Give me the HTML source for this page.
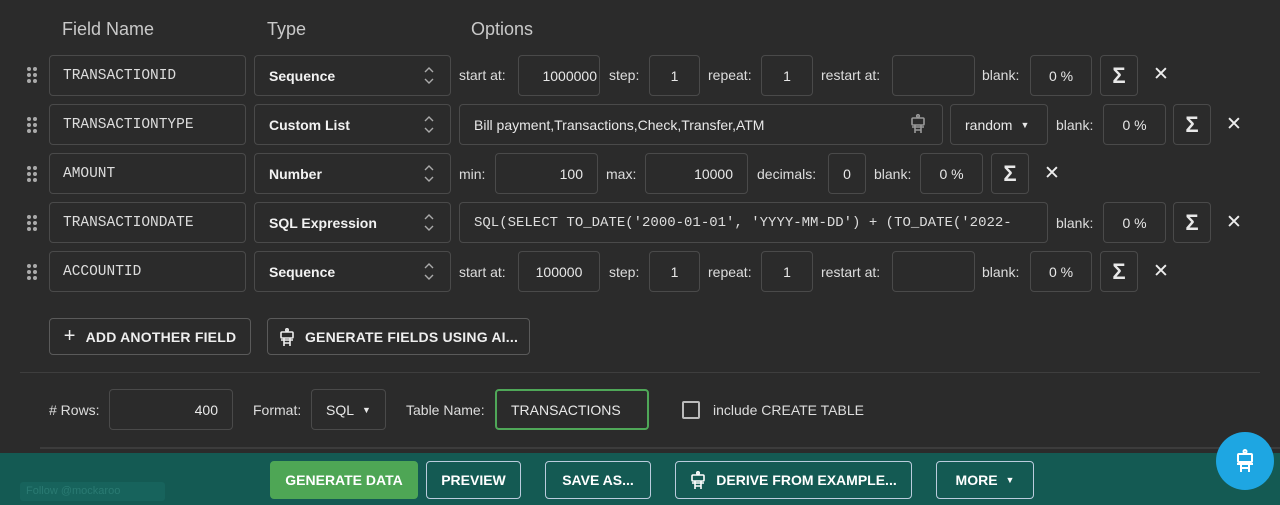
<!DOCTYPE html>
<html><head><meta charset="utf-8"><style>
*{box-sizing:border-box;margin:0;padding:0}
body{width:1280px;height:505px;background:#2b2b2b;font-family:"Liberation Sans",Arial,sans-serif;color:#e8e8e8;position:relative;overflow:hidden}
.a{position:absolute}
.h{font-size:18px;color:#c9c9c9;top:19px}
.b{position:absolute;border:1px solid #4a4a4a;border-radius:4px;height:41px;display:flex;align-items:center;font-size:14px}
.n{font-family:"Liberation Mono",monospace;font-size:14.5px;color:#ddd;padding-left:13px}
.t{font-weight:bold;padding-left:14px;color:#f2f2f2}
.r{justify-content:flex-end;padding-right:14px}
.c{justify-content:center}
.l{position:absolute;font-size:14px;color:#ddd}
.dr{position:absolute;width:10px;height:16px}
.dr i{position:absolute;width:4px;height:4px;border-radius:50%;background:#aaa}
.x{position:absolute;font-size:19px;color:#eee;line-height:1;font-weight:300}
.sg{font-size:22px;font-weight:bold}
.btn{position:absolute;border:1px solid #5a5a5a;border-radius:4px;height:37px;display:flex;align-items:center;justify-content:center;font-size:14px;font-weight:bold;color:#eee;letter-spacing:.2px}
.gb{position:absolute;border:1px solid #bcd;border-radius:4px;top:461px;height:38px;display:flex;align-items:center;justify-content:center;font-size:14px;font-weight:bold;color:#fff}
</style></head><body>
<div class="a h" style="left:62px">Field Name</div>
<div class="a h" style="left:267px">Type</div>
<div class="a h" style="left:471px">Options</div>

<div class="dr" style="left:27px;top:67px"><i style="left:0;top:0"></i><i style="left:6px;top:0"></i><i style="left:0;top:6px"></i><i style="left:6px;top:6px"></i><i style="left:0;top:12px"></i><i style="left:6px;top:12px"></i></div>
<div class="dr" style="left:27px;top:117px"><i style="left:0;top:0"></i><i style="left:6px;top:0"></i><i style="left:0;top:6px"></i><i style="left:6px;top:6px"></i><i style="left:0;top:12px"></i><i style="left:6px;top:12px"></i></div>
<div class="dr" style="left:27px;top:166px"><i style="left:0;top:0"></i><i style="left:6px;top:0"></i><i style="left:0;top:6px"></i><i style="left:6px;top:6px"></i><i style="left:0;top:12px"></i><i style="left:6px;top:12px"></i></div>
<div class="dr" style="left:27px;top:215px"><i style="left:0;top:0"></i><i style="left:6px;top:0"></i><i style="left:0;top:6px"></i><i style="left:6px;top:6px"></i><i style="left:0;top:12px"></i><i style="left:6px;top:12px"></i></div>
<div class="dr" style="left:27px;top:264px"><i style="left:0;top:0"></i><i style="left:6px;top:0"></i><i style="left:0;top:6px"></i><i style="left:6px;top:6px"></i><i style="left:0;top:12px"></i><i style="left:6px;top:12px"></i></div>

<div class="b n" style="left:49px;top:55px;width:197px">TRANSACTIONID</div>
<div class="b n" style="left:49px;top:104px;width:197px">TRANSACTIONTYPE</div>
<div class="b n" style="left:49px;top:153px;width:197px">AMOUNT</div>
<div class="b n" style="left:49px;top:202px;width:197px">TRANSACTIONDATE</div>
<div class="b n" style="left:49px;top:251px;width:197px">ACCOUNTID</div>
<div class="b t" style="left:254px;top:55px;width:197px">Sequence</div>
<div class="b t" style="left:254px;top:104px;width:197px">Custom List</div>
<div class="b t" style="left:254px;top:153px;width:197px">Number</div>
<div class="b t" style="left:254px;top:202px;width:197px">SQL Expression</div>
<div class="b t" style="left:254px;top:251px;width:197px">Sequence</div>
<svg class="a" style="left:424px;top:67px" width="10" height="215" fill="none" stroke="#aaa" stroke-width="1.4">
<g id="ud"><path d="M1 5l4-4 4 4M1 12l4 4 4-4"/></g>
<use href="#ud" y="49"/><use href="#ud" y="98"/><use href="#ud" y="147"/><use href="#ud" y="196"/></svg>

<div class="l" style="left:459px;top:67px">start at:</div>
<div class="b r" style="left:518px;top:55px;width:82px;padding-right:2px;overflow:hidden">1000000</div>
<div class="l" style="left:609px;top:67px">step:</div>
<div class="b c" style="left:649px;top:55px;width:51px">1</div>
<div class="l" style="left:708px;top:67px">repeat:</div>
<div class="b c" style="left:761px;top:55px;width:52px">1</div>
<div class="l" style="left:821px;top:67px">restart at:</div>
<div class="b" style="left:892px;top:55px;width:83px"></div>
<div class="l" style="left:982px;top:67px">blank:</div>
<div class="b c" style="left:1030px;top:55px;width:62px">0 %</div>
<div class="b c sg" style="left:1100px;top:55px;width:38px">Σ</div>
<div class="x" style="left:1153px;top:65px">✕</div>

<div class="l" style="left:459px;top:264px">start at:</div>
<div class="b c" style="left:518px;top:251px;width:82px">100000</div>
<div class="l" style="left:609px;top:264px">step:</div>
<div class="b c" style="left:649px;top:251px;width:51px">1</div>
<div class="l" style="left:708px;top:264px">repeat:</div>
<div class="b c" style="left:761px;top:251px;width:52px">1</div>
<div class="l" style="left:821px;top:264px">restart at:</div>
<div class="b" style="left:892px;top:251px;width:83px"></div>
<div class="l" style="left:982px;top:264px">blank:</div>
<div class="b c" style="left:1030px;top:251px;width:62px">0 %</div>
<div class="b c sg" style="left:1100px;top:251px;width:38px">Σ</div>
<div class="x" style="left:1153px;top:262px">✕</div>

<div class="b" style="left:459px;top:104px;width:484px;padding-left:14px">Bill payment,Transactions,Check,Transfer,ATM</div>
<svg class="a" style="left:909px;top:114px" width="18" height="20" fill="none" stroke="#999" stroke-width="1.6"><circle cx="9" cy="2" r="1.3"/><rect x="3" y="4" width="12" height="7" rx="1"/><path d="M3 13h12M6 11v8M12 11v8M6 16h6"/></svg>
<div class="b" style="left:950px;top:104px;width:98px;padding-left:14px">random <span style="margin-left:8px;font-size:9px">▼</span></div>
<div class="l" style="left:1056px;top:117px">blank:</div>
<div class="b c" style="left:1103px;top:104px;width:63px">0 %</div>
<div class="b c sg" style="left:1173px;top:104px;width:38px">Σ</div>
<div class="x" style="left:1226px;top:115px">✕</div>

<div class="l" style="left:459px;top:166px">min:</div>
<div class="b r" style="left:495px;top:153px;width:103px">100</div>
<div class="l" style="left:606px;top:166px">max:</div>
<div class="b r" style="left:645px;top:153px;width:103px">10000</div>
<div class="l" style="left:757px;top:166px">decimals:</div>
<div class="b c" style="left:828px;top:153px;width:38px">0</div>
<div class="l" style="left:874px;top:166px">blank:</div>
<div class="b c" style="left:920px;top:153px;width:63px">0 %</div>
<div class="b c sg" style="left:991px;top:153px;width:38px">Σ</div>
<div class="x" style="left:1044px;top:164px">✕</div>

<div class="b n" style="left:459px;top:202px;width:589px;padding-left:14px;overflow:hidden;white-space:nowrap;font-size:14px">SQL(SELECT TO_DATE('2000-01-01', 'YYYY-MM-DD') + (TO_DATE('2022-</div>
<div class="l" style="left:1056px;top:215px">blank:</div>
<div class="b c" style="left:1103px;top:202px;width:63px">0 %</div>
<div class="b c sg" style="left:1173px;top:202px;width:38px">Σ</div>
<div class="x" style="left:1226px;top:213px">✕</div>

<div class="btn" style="left:49px;top:318px;width:202px"><span style="font-size:20px;font-weight:normal;margin-right:10px">+</span>ADD ANOTHER FIELD</div>
<div class="btn" style="left:267px;top:318px;width:263px"><svg width="16" height="18" fill="none" stroke="#eee" stroke-width="1.6" style="margin-right:10px"><circle cx="8" cy="2" r="1.2"/><rect x="2" y="4" width="12" height="6" rx="1"/><path d="M2 12h12M5 10v8M11 10v8M5 15h6"/></svg>GENERATE FIELDS USING AI...</div>

<div class="a" style="left:20px;top:372px;width:1240px;height:1px;background:#3e3e3e"></div>

<div class="l" style="left:49px;top:402px">#&nbsp;Rows:</div>
<div class="b r" style="left:109px;top:389px;width:124px">400</div>
<div class="l" style="left:253px;top:402px">Format:</div>
<div class="b" style="left:311px;top:389px;width:75px;padding-left:14px">SQL <span style="margin-left:8px;font-size:9px">▼</span></div>
<div class="l" style="left:406px;top:402px">Table Name:</div>
<div class="b" style="left:495px;top:389px;width:154px;padding-left:14px;border:2px solid #4fa758">TRANSACTIONS</div>
<div class="a" style="left:682px;top:401px;width:18px;height:18px;border:2px solid #bbb;border-radius:2px"></div>
<div class="l" style="left:713px;top:402px">include CREATE TABLE</div>

<div class="a" style="left:40px;top:447px;width:1240px;height:2px;background:#3c3c3c"></div>
<div class="a" style="left:0;top:453px;width:1280px;height:52px;background:#145a53"></div>
<div class="a" style="left:20px;top:482px;width:145px;height:19px;background:#17635c;border-radius:3px;font-size:11px;color:#2a7a72;padding:3px 6px">Follow @mockaroo</div>
<div class="gb" style="left:270px;width:148px;background:#4ea655;border-color:#4ea655">GENERATE DATA</div>
<div class="gb" style="left:426px;width:95px">PREVIEW</div>
<div class="gb" style="left:545px;width:106px">SAVE AS...</div>
<div class="gb" style="left:675px;width:237px"><svg width="16" height="18" fill="none" stroke="#fff" stroke-width="1.6" style="margin-right:10px"><circle cx="8" cy="2" r="1.2"/><rect x="2" y="4" width="12" height="6" rx="1"/><path d="M2 12h12M5 10v8M11 10v8M5 15h6"/></svg>DERIVE FROM EXAMPLE...</div>
<div class="gb" style="left:936px;width:98px">MORE <span style="margin-left:8px;font-size:9px">▼</span></div>
<div class="a" style="left:1216px;top:432px;width:58px;height:58px;border-radius:50%;background:#1ea6e2"></div>
<svg class="a" style="left:1234px;top:449px" width="22" height="24" fill="none" stroke="#fff" stroke-width="2"><circle cx="11" cy="2.5" r="1.5"/><rect x="4" y="5" width="14" height="8" rx="1"/><path d="M3 15h16M7 13v10M15 13v10M7 19h8"/></svg>
</body></html>
